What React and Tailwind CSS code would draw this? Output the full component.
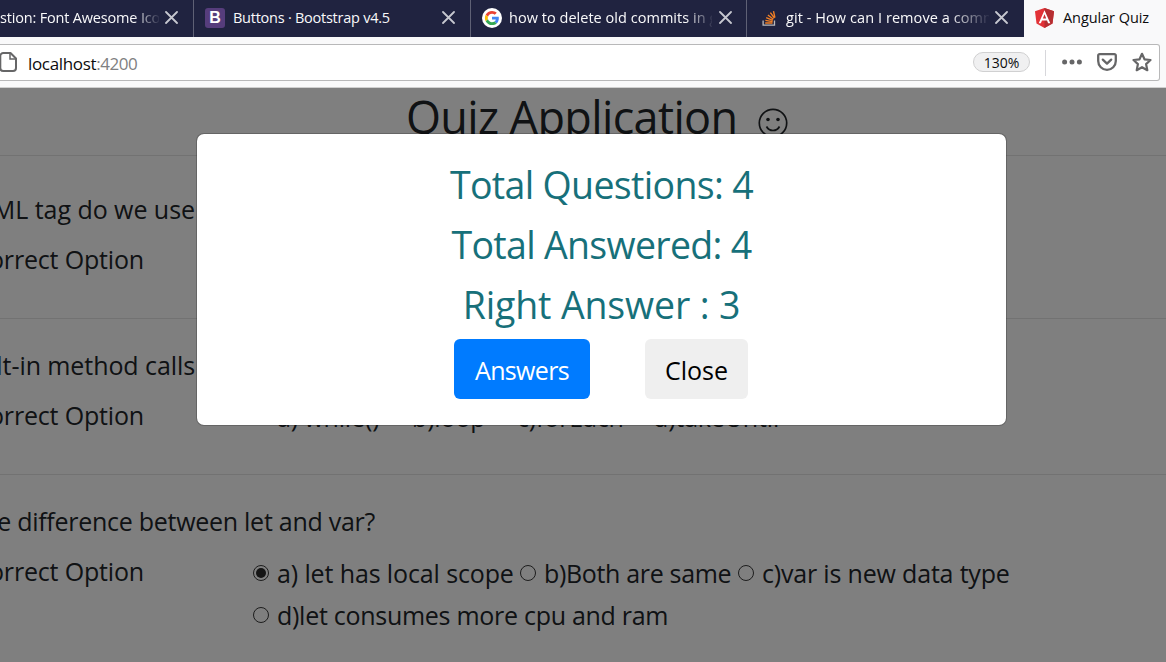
import React from "react";

function CloseIcon() {
  return (
    <svg className="h-[13px] w-[13px] shrink-0" viewBox="0 0 13 13" fill="none" stroke="#c6c7cf" strokeWidth="1.8" strokeLinecap="round">
      <path d="M1 1 12 12M12 1 1 12" />
    </svg>
  );
}

function BootstrapIcon() {
  return (
    <span className="flex h-5 w-5 shrink-0 items-center justify-center rounded-[3px] bg-[#563d7c] font-['Liberation_Sans',sans-serif] text-[16px] leading-none font-bold text-white">
      B
    </span>
  );
}

function GoogleIcon() {
  return (
    <svg className="h-5 w-5 shrink-0" viewBox="0 0 20 20">
      <circle cx="10" cy="10" r="10" fill="#fff" />
      <g transform="translate(2.9 2.9) scale(0.296)">
        <path fill="#EA4335" d="M24 9.5c3.54 0 6.71 1.22 9.21 3.6l6.85-6.85C35.9 2.38 30.47 0 24 0 14.62 0 6.51 5.38 2.56 13.22l7.98 6.19C12.43 13.72 17.74 9.5 24 9.5z" />
        <path fill="#4285F4" d="M46.98 24.55c0-1.57-.15-3.09-.38-4.55H24v9.02h12.94c-.58 2.96-2.26 5.48-4.78 7.18l7.73 6c4.51-4.18 7.09-10.36 7.09-17.65z" />
        <path fill="#FBBC05" d="M10.53 28.59c-.48-1.45-.76-2.99-.76-4.59s.27-3.14.76-4.59l-7.98-6.19C.92 16.46 0 20.12 0 24c0 3.88.92 7.54 2.56 10.78l7.97-6.19z" />
        <path fill="#34A853" d="M24 48c6.48 0 11.93-2.13 15.89-5.81l-7.73-6c-2.15 1.45-4.92 2.3-8.16 2.3-6.26 0-11.57-4.22-13.47-9.91l-7.98 6.19C6.51 42.62 14.62 48 24 48z" />
      </g>
    </svg>
  );
}

function StackIcon() {
  return (
    <svg className="h-[18px] w-[16px] shrink-0" viewBox="0 0 16 18" fill="none">
      <path d="M1.1 11.500v4.700h11.400V11.500" stroke="#bcbbbb" strokeWidth="1.300" />
      <g stroke="#f48024" strokeWidth="1.400">
        <path d="M3.200 14H10.500M3.400 11.400l7.200 1.200M4.200 8.700l6.600 2.600M5.900 6l5.500 4.200M8.400 3.600l4 5.600M11.500 2.200l1.400 6.400" />
      </g>
    </svg>
  );
}

function AngularIcon() {
  return (
    <svg className="h-[20px] w-[19px] shrink-0" viewBox="0 0 19 20">
      <path d="M9.5 0 0 3.3 1.5 15.6 9.5 20 17.5 15.6 19 3.3z" fill="#e23237" />
      <path d="M9.5 0v20l8-4.4L19 3.3z" fill="#b52e31" />
      <path d="M9.5 2.2 3.7 15.2h2.2l1.1-2.8h5l1.1 2.8h2.2zM9.5 6.3l1.7 4.3H7.8z" fill="#fff" fillRule="evenodd" />
    </svg>
  );
}

function TabBar() {
  return (
    <div className="flex h-[37px] bg-[#202340] text-[14.5px] leading-[35px] whitespace-nowrap text-[#f9f9fa]">
      <div className="flex w-[194px] shrink-0 border-r border-[#5f6175]">
        <div className="flex h-[35px] items-center">
          <span className="w-[159px] overflow-hidden tracking-[-0.18px] [mask-image:linear-gradient(to_right,#000_84%,transparent_101%)]">
            stion: Font Awesome Icons
          </span>
          <span className="ml-[6px] flex"><CloseIcon /></span>
        </div>
      </div>
      <div className="flex w-[277px] shrink-0 border-r border-[#5f6175] pl-[11px]">
        <div className="flex h-[35px] items-center">
          <BootstrapIcon />
          <span className="ml-[8px] w-[202px] tracking-[-0.25px]">Buttons · Bootstrap v4.5</span>
          <span className="ml-[7px] flex"><CloseIcon /></span>
        </div>
      </div>
      <div className="flex w-[276px] shrink-0 border-r border-[#5f6175] pl-[11px]">
        <div className="flex h-[35px] items-center">
          <GoogleIcon />
          <span className="ml-[7px] w-[203px] overflow-hidden tracking-[0.03px] [mask-image:linear-gradient(to_right,#000_87%,transparent_101%)]">
            how to delete old commits in github
          </span>
          <span className="ml-[7px] flex"><CloseIcon /></span>
        </div>
      </div>
      <div className="flex w-[277px] shrink-0 pl-[15px]">
        <div className="flex h-[35px] items-center">
          <StackIcon />
          <span className="ml-[8px] w-[203px] overflow-hidden tracking-[0.07px] [mask-image:linear-gradient(to_right,#000_80%,transparent_101%)]">
            git - How can I remove a commit
          </span>
          <span className="ml-[6px] flex"><CloseIcon /></span>
        </div>
      </div>
      <div className="flex grow bg-[#f9f9fa] pl-[11px] text-[#0c0c0d]">
        <div className="flex h-[35px] items-center">
          <AngularIcon />
          <span className="ml-[9px] tracking-[-0.07px]">Angular Quiz</span>
        </div>
      </div>
    </div>
  );
}

function AddressBar() {
  return (
    <div className="flex h-[51px] items-start border-b border-[#cfcfcf] bg-[#f9f9fa] pt-[7px] pr-[6px]">
      <div className="flex h-[37px] grow items-center rounded-r-[3px] border border-l-0 border-[#b8b8b9] bg-white">
        <svg className="-mt-px h-5 w-[18px] shrink-0" viewBox="0 0 18 20" fill="none" stroke="#666667" strokeWidth="2">
          <path d="M.3 4a3 3 0 0 1 3-3H10.500L16 6.500V16a3 3 0 0 1-3 3H3.300a3 3 0 0 1-3-3z" strokeLinejoin="round" />
          <path d="M10 1.500V7h5.500" strokeWidth="1.500" />
        </svg>
        <span className="ml-[10px] pt-px text-[17px] leading-[35px] text-[#0c0c0d]">
          <span className="tracking-[-0.33px]">localhost</span>
          <span className="tracking-[-0.5px] text-[#808081]">:4200</span>
        </span>
        <span className="-mt-px ml-auto flex h-5 w-[57px] items-center justify-center rounded-full border border-[#d0d0d1] bg-[#f0f0f1] pt-[2px] text-[14px] leading-none text-[#0c0c0d]">
          130%
        </span>
        <span className="ml-[15px] h-[26px] w-px bg-[#d7d7db]" />
        <svg className="-mt-px ml-[16px] h-5 w-5" viewBox="0 0 20 20" fill="#666667">
          <circle cx="2.600" cy="10" r="2.500" />
          <circle cx="10" cy="10" r="2.500" />
          <circle cx="17.400" cy="10" r="2.500" />
        </svg>
        <svg className="-mt-px ml-[15px] h-5 w-5" viewBox="0 0 20 20" fill="none" stroke="#666667" strokeWidth="2.300" strokeLinecap="round" strokeLinejoin="round">
          <path d="M2.600 2.200h14.800a1.400 1.400 0 0 1 1.400 1.400V9a8.800 8.800 0 0 1-17.600 0V3.600a1.400 1.400 0 0 1 1.400-1.400z" />
          <path d="M5.800 7.600 10 11.600l4.200-4" />
        </svg>
        <svg className="-mt-px mr-[7px] ml-[15px] h-5 w-5" viewBox="0 0 20 20" fill="none" stroke="#666667" strokeWidth="2.200" strokeLinejoin="round">
          <path d="M10 1.800 12.500 7.300 18.500 8 14.100 12.100 15.300 18.200 10 15.200 4.700 18.200 5.900 12.100 1.500 8 7.500 7.300z" />
        </svg>
      </div>
    </div>
  );
}

function Option({ className, checked, children }) {
  return (
    <label className={"flex shrink-0 items-center " + className}>
      <span className="flex h-4 w-4 shrink-0 items-center justify-center rounded-full border border-[#3a3a3a] bg-white">
        {checked && <span className="h-[10px] w-[10px] rounded-full bg-[#2a2a2a]" />}
      </span>
      <span className="ml-[8px] whitespace-nowrap">{children}</span>
    </label>
  );
}

function Question({ title, first, children }) {
  return (
    <section className={"border-t border-black/10 " + (first ? "h-[163px] pt-[28px]" : "h-[156px] pt-[21px]")}>
      <div className="flex h-[50px] leading-[50px]">{title}</div>
      <div className="flex">
        <div className="flex h-[50px] w-[144px] shrink-0 justify-end overflow-hidden leading-[50px] tracking-[-0.17px] whitespace-nowrap">
          Correct Option
        </div>
        <div className="ml-[109px] pt-[6px] leading-[42px]">{children}</div>
      </div>
    </section>
  );
}

function QuizPage() {
  return (
    <div className="h-[574px] overflow-hidden bg-white text-[25px] text-[#212529]">
      <h1 className="flex h-[67px] pl-[406px] text-[45px] leading-[58px] tracking-[-0.63px] whitespace-nowrap">
        Quiz Application
        <svg className="mt-[20px] ml-[20px] h-[30px] w-[30px]" viewBox="0 0 30 30" fill="none" stroke="#212529" strokeWidth="1.700">
          <circle cx="15" cy="15" r="13.700" />
          <circle cx="10" cy="11.500" r="1.800" fill="#212529" stroke="none" />
          <circle cx="20" cy="11.500" r="1.800" fill="#212529" stroke="none" />
          <path d="M8.500 18.500c2.800 5.300 10.200 5.300 13 0" />
        </svg>
      </h1>
      <Question
        first
        title={<div className="flex w-[195px] justify-end overflow-hidden tracking-[-0.05px] whitespace-nowrap">HTML tag do we use</div>}
      />
      <Question
        title={<div className="flex w-[195px] justify-end overflow-hidden tracking-[-0.08px] whitespace-nowrap">built-in method calls</div>}
      >
        <div className="flex tracking-[-0.15px]">
          <Option className="w-[135px]">a) while()</Option>
          <Option className="w-[105px]">b)loop</Option>
          <Option className="w-[136px]">c)forEach</Option>
          <Option className="w-[150px]">d)takeUntil</Option>
        </div>
      </Question>
      <Question
        title={<div className="flex w-[375px] justify-end overflow-hidden tracking-[-0.27px] whitespace-nowrap">the difference between let and var?</div>}
      >
        <div className="flex">
          <Option className="w-[267px] tracking-[-0.12px]" checked>a) let has local scope</Option>
          <Option className="w-[218px] tracking-[-0.33px]">b)Both are same</Option>
          <Option className="w-[300px] tracking-[-0.18px]">c)var is new data type</Option>
        </div>
        <div className="flex">
          <Option className="w-[420px] tracking-[-0.28px]">d)let consumes more cpu and ram</Option>
        </div>
      </Question>
    </div>
  );
}

function ResultModal() {
  return (
    <div className="absolute inset-0 flex items-start justify-center bg-black/50 pt-[45px] pl-[37px]">
      <div className="h-[293px] w-[811px] rounded-[8px] border border-black/20 bg-white bg-clip-padding pt-[21px] text-center text-[37.5px] leading-[60px] text-[#17707a]">
        <p className="tracking-[-0.66px]">Total Questions: 4</p>
        <p className="tracking-[-0.69px]">Total Answered: 4</p>
        <p className="tracking-[-0.15px]">Right Answer : 3</p>
        <div className="mt-[4px] flex justify-center gap-[55px] pr-[2px] text-[25px]">
          <button className="h-[60px] w-[136px] rounded-[6px] bg-[#007bff] pt-px pl-px tracking-[-0.65px] text-white">Answers</button>
          <button className="h-[60px] w-[103px] rounded-[6px] bg-[#efefef] pt-px pl-px tracking-[-0.05px] text-black">Close</button>
        </div>
      </div>
    </div>
  );
}

export default function App() {
  return (
    <div className="h-[662px] w-[1166px] overflow-hidden font-['Open_Sans','Noto_Sans',sans-serif]">
      <TabBar />
      <AddressBar />
      <main className="relative">
        <QuizPage />
        <ResultModal />
      </main>
    </div>
  );
}
